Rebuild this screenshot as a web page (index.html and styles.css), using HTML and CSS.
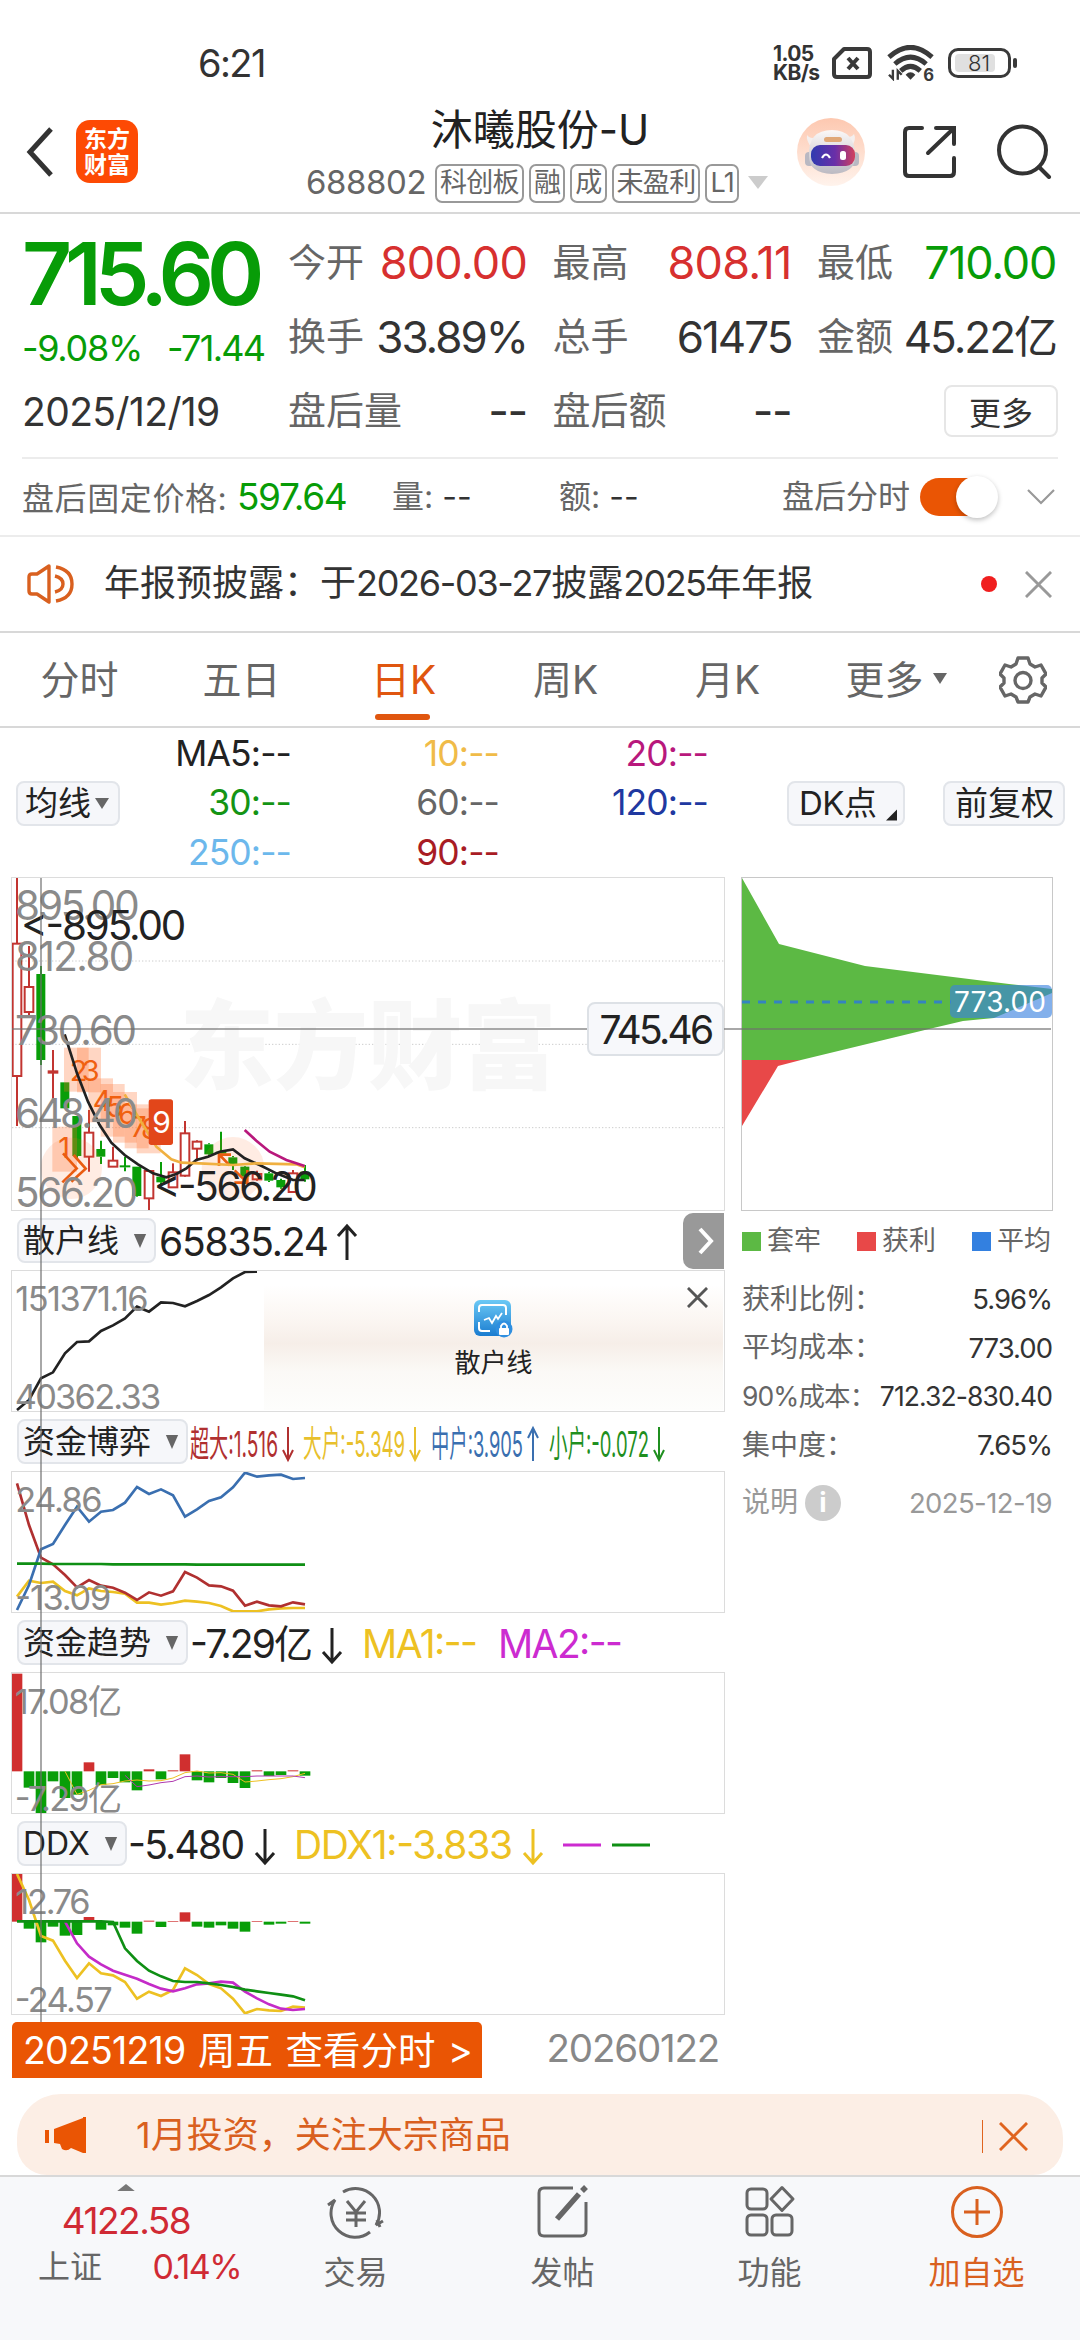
FILE: index.html
```html
<!DOCTYPE html>
<html lang="zh-CN">
<head>
  <meta charset="UTF-8">
  <meta name="viewport" content="width=device-width, initial-scale=1.0">
  <title>沐曦股份-U</title>
  <link rel="stylesheet" href="styles.css">
</head>
<body>
  <div class="status-bar">
    <span class="clock">6:21</span>
    <div class="status-icons">
      <span class="net-speed">1.05<br>KB/s</span>
      <svg class="sim-icon" viewBox="0 0 40 32">
        <path d="M12 2H35Q38 2 38 5V27Q38 30 35 30H5Q2 30 2 27V12Z" fill="none" stroke="#3a3a3a" stroke-width="4" stroke-linejoin="round"/>
        <path d="M16 11L26 22M26 11L16 22" stroke="#3a3a3a" stroke-width="4"/>
      </svg>
      <svg class="wifi-icon" viewBox="0 0 48 36">
        <path d="M2 12Q24 -8 46 12M8 19Q24 5 40 19M14 26Q24 17 34 26" fill="none" stroke="#3a3a3a" stroke-width="5"/>
        <path d="M19 30L24 35L29 30Q24 25 19 30Z" fill="#3a3a3a"/>
        <path d="M6 25V34L2 30M11 35V26L15 30" fill="none" stroke="#3a3a3a" stroke-width="2.400"/>
        <text x="37" y="36" font-size="17" font-weight="700" fill="#3a3a3a">6</text>
      </svg>
      <div class="battery"><span>81</span></div>
    </div>
  </div>

  <div class="header">
    <svg class="back-icon" viewBox="0 0 28 50"><path d="M25 2L4 25L25 48" fill="none" stroke="#333" stroke-width="5"/></svg>
    <div class="app-logo">东方<br>财富</div>
    <div class="stock-title">
      <div class="stock-name">沐曦股份-U</div>
      <div class="stock-tags">
        <span class="stock-code">688802</span>
        <span class="tag">科创板</span>
        <span class="tag">融</span>
        <span class="tag">成</span>
        <span class="tag">未盈利</span>
        <span class="tag">L1</span>
        <svg class="tag-arrow" viewBox="0 0 20 14"><path d="M0 0H20L10 13Z" fill="#ccc"/></svg>
      </div>
    </div>
    <svg class="robot-icon" viewBox="0 0 68 68">
      <defs>
        <linearGradient id="halo" x1="0" y1="0" x2="0" y2="1"><stop offset="0" stop-color="#fdc8b0"/><stop offset="1" stop-color="#fff3ec"/></linearGradient>
        <linearGradient id="visor" x1="0" y1="0" x2="1" y2="0"><stop offset="0" stop-color="#2f3bb0"/><stop offset=".55" stop-color="#6a2fa8"/><stop offset="1" stop-color="#d2405c"/></linearGradient>
        <linearGradient id="helmet" x1="0" y1="0" x2="0" y2="1"><stop offset="0" stop-color="#fbf8f7"/><stop offset="1" stop-color="#bcbac2"/></linearGradient>
      </defs>
      <circle cx="34" cy="34" r="34" fill="url(#halo)"/>
      <path d="M10 17Q9 22 14 29L20 20Q13 21 10 17ZM57 16Q60 22 54 29L47 19Q54 20 57 16Z" fill="#f4efee"/>
      <rect x="8" y="34" width="9" height="14" rx="4" fill="#b9b8c2"/>
      <rect x="53" y="34" width="9" height="14" rx="4" fill="#b9b8c2"/>
      <path d="M12 38Q11 12 35 12Q58 12 58 38Q59 55 35 56Q12 55 12 38Z" fill="url(#helmet)"/>
      <rect x="27" y="19" width="18" height="5" rx="2.500" fill="#e0a878"/>
      <rect x="14" y="27" width="44" height="21" rx="9" fill="url(#visor)"/>
      <path d="M25 40Q29 33 33 40" fill="none" stroke="#fff" stroke-width="2.200"/>
      <rect x="43" y="33" width="6" height="9" rx="2.500" fill="#fff"/>
    </svg>
    <svg class="share-icon" viewBox="0 0 54 54" fill="none" stroke="#333" stroke-width="4" stroke-linecap="round">
      <path d="M19 3H6Q2 3 2 7V47Q2 51 6 51H47Q51 51 51 47V33"/>
      <path d="M25 28L49 5M33 3H51V19"/>
    </svg>
    <svg class="search-icon" viewBox="0 0 56 56" fill="none" stroke="#333" stroke-width="4" stroke-linecap="round">
      <circle cx="25.500" cy="27" r="23.500"/><path d="M42 44L52 54"/>
    </svg>
  </div>

  <div class="quote">
    <div class="quote-main">
      <div class="price">715.60</div>
      <div class="change"><span>-9.08%</span><span class="diff">-71.44</span></div>
      <div class="date">2025/12/19</div>
    </div>
    <div class="stats">
      <div class="stat"><span>今开</span><b class="up wide">800.00</b></div>
      <div class="stat"><span>最高</span><b class="up wide">808.11</b></div>
      <div class="stat"><span>最低</span><b class="down">710.00</b></div>
      <div class="stat"><span>换手</span><b class="tight">33.89%</b></div>
      <div class="stat"><span>总手</span><b class="tight">61475</b></div>
      <div class="stat"><span>金额</span><b class="tight">45.22亿</b></div>
      <div class="stat"><span>盘后量</span><b>--</b></div>
      <div class="stat"><span>盘后额</span><b>--</b></div>
      <div class="stat stat-more"><button class="more-btn">更多</button></div>
    </div>
  </div>

  <div class="after-hours">
    <span class="ah-label ah-first">盘后固定价格: <b class="down">597.64</b></span>
    <span class="ah-label ah-vol">量: <b>--</b></span>
    <span class="ah-label ah-amt">额: <b>--</b></span>
    <span class="ah-label">盘后分时</span>
    <div class="toggle"></div>
    <svg class="ah-chevron" viewBox="0 0 28 16"><path d="M1 1L14 14L27 1" fill="none" stroke="#999" stroke-width="2.200"/></svg>
  </div>

  <div class="notice">
    <svg class="horn-icon" viewBox="0 0 48 42" fill="none" stroke="#d9601f" stroke-width="3.400">
      <path d="M22 3L10 11H5Q2 11 2 14V28Q2 31 5 31H10L22 39Z" stroke-linejoin="round"/>
      <path d="M29 4Q45 7 45 21Q45 35 29 38M28 13Q36 15 36 21Q36 27 28 29"/>
    </svg>
    <span class="notice-text">年报预披露：于<i>2026-03-27</i>披露<i class="yr">2025</i>年年报</span>
    <span class="red-dot"></span>
    <svg class="close-icon" viewBox="0 0 28 28"><path d="M1 1L27 27M27 1L1 27" stroke="#999" stroke-width="3"/></svg>
  </div>

  <div class="tabs">
    <span class="tab">分时</span>
    <span class="tab">五日</span>
    <span class="tab active">日K</span>
    <span class="tab">周K</span>
    <span class="tab">月K</span>
    <span class="tab">更多<svg class="tri" viewBox="0 0 14 11"><path d="M0 0H14L7 11Z" fill="#666"/></svg></span>
    <svg class="gear-icon" viewBox="0 0 48 48" fill="none" stroke="#666" stroke-width="3.400">
      <path d="M19 2H29L31 8L36 11L42 9L47 18L43 22V27L47 31L42 40L36 38L31 41L29 46H19L17 41L12 38L6 40L1 31L5 27V22L1 18L6 9L12 11L17 8Z" stroke-linejoin="round"/>
      <circle cx="24" cy="24.500" r="8"/>
    </svg>
  </div>

  <div class="ma-bar">
    <button class="chip ma-chip">均线<svg class="tri" viewBox="0 0 14 11"><path d="M0 0H14L7 11Z" fill="#666"/></svg></button>
    <div class="ma-grid">
      <span class="c-ink">MA5:--</span><span class="c-amber">10:--</span><span class="c-pink">20:--</span>
      <span class="c-green">30:--</span><span class="c-gray">60:--</span><span class="c-navy">120:--</span>
      <span class="c-sky">250:--</span><span class="c-crimson">90:--</span>
    </div>
    <button class="chip dk-chip">DK点<svg class="corner" viewBox="0 0 12 12"><path d="M12 0V12H0Z" fill="#222"/></svg></button>
    <button class="chip fq-chip">前复权</button>
  </div>

  <div class="charts">
    <div class="left-col">
      <!-- k line -->
      <div class="panel k-panel">
        <svg id="kline" viewBox="37 24 2136 996">
          <g class="grid-lines">
            <path d="M37 273H2173M37 523H2173M37 773H2173"/>
          </g>
          <text class="watermark" x="540" y="634" textLength="1130" lengthAdjust="spacingAndGlyphs">东方财富</text>
          <g id="candles"></g>
          <g class="td">
            <circle cx="215" cy="895" r="92"/><circle cx="700" cy="895" r="94"/>
            <rect x="158" y="770" width="74" height="135"/>
            <rect x="193" y="533" width="74" height="132"/>
            <rect x="232" y="533" width="72" height="134"/>
            <rect x="266" y="625" width="74" height="132"/>
            <rect x="303" y="642" width="72" height="158"/>
            <rect x="340" y="666" width="72" height="152"/>
            <rect x="375" y="703" width="72" height="132"/>
            <rect x="411" y="715" width="72" height="135"/>
          </g>
          <g class="td-num">
            <text x="176" y="864">1</text><text x="210" y="632">2</text><text x="246" y="632">3</text>
            <text x="279" y="722">4</text><text x="320" y="742">5</text><text x="355" y="762">6</text>
            <text x="392" y="802">7</text><text x="424" y="808">8</text>
          </g>
          <g class="td-arrow">
            <path d="M190 850L231 895L188 937M222 855L258 896L215 935"/>
            <path d="M690 886L660 855M658 888V854H694M705 901L742 937M704 938H743V900"/>
          </g>
          <path class="line ink" d="M195 493L232 610L265 695L300 765L335 818L375 855L415 883L460 910L500 922L530 912L560 895L590 870L625 860L660 845L700 838L735 865L780 885L830 910L880 930L915 930"/>
          <path class="line amber" d="M375 673L400 715L430 765L470 830L515 868L545 878L600 880L700 885L770 880L890 883L915 892"/>
          <path class="line pink" d="M735 780L770 812L810 845L860 870L915 888"/>
          <rect x="447" y="688" width="73" height="137" rx="8" fill="#e2461a"/>
          <text x="458" y="790" font-size="90" fill="#fff">9</text>
          <g class="axis">
            <text x="46" y="151" textLength="374">895.00</text>
            <text x="46" y="303" textLength="358">812.80</text>
            <text x="46" y="525" textLength="366">730.60</text>
            <text x="46" y="775" textLength="370">648.40</text>
            <text x="46" y="1011" textLength="370">566.20</text>
          </g>
          <g class="peak">
            <text x="64" y="210" textLength="496">&lt;-895.00</text>
            <text x="462" y="993" textLength="492">&lt;-566.20</text>
          </g>
        </svg>
      </div>

      <div class="ind-head">
        <button class="chip ind-chip">散户线<svg class="tri" viewBox="0 0 14 16"><path d="M0 0H14L7 16Z" fill="#666"/></svg></button>
        <svg class="ind-values" viewBox="155 0 520 60">
          <text x="158" y="45" textLength="170">65835.24</text>
          <path class="arr ink" d="M346 49V16M337 25L346 15L355 25"/>
        </svg>
        <div class="expand-btn"><svg viewBox="0 0 16 28"><path d="M2 2L13 14L2 26" fill="none" stroke="#fff" stroke-width="4"/></svg></div>
      </div>
      <div class="panel">
        <svg viewBox="0 183 2136 420">
          <g id="retail"></g>
          <g class="axis small">
            <text x="10" y="302" textLength="400">151371.16</text>
            <text x="8" y="597" textLength="440">40362.33</text>
          </g>
        </svg>
        <div class="lock-cover">
          <svg class="lock-icon" viewBox="0 0 39 38">
            <defs><linearGradient id="blue" x1="0" y1="0" x2="0" y2="1"><stop offset="0" stop-color="#6cc9f5"/><stop offset="1" stop-color="#1a7cd0"/></linearGradient></defs>
            <rect x="0" y="0" width="37" height="36" rx="6" fill="url(#blue)"/>
            <path d="M5 12V8Q5 5 8 5H29Q32 5 32 8V15M5 22V28Q5 31 8 31H16" fill="none" stroke="#fff" stroke-width="2"/>
            <path d="M10 20L15 18L18 23L22 16L24 19L28 13" fill="none" stroke="#fff" stroke-width="1.800"/>
            <circle cx="30" cy="29" r="8.500" fill="#2f8fe0"/>
            <rect x="25" y="28" width="10" height="7" rx="1" fill="#fff"/>
            <path d="M27 28V26Q30 21 33 26V28" fill="none" stroke="#fff" stroke-width="1.800"/>
          </svg>
          <span>散户线</span>
          <svg class="cover-close" viewBox="0 0 22 22"><path d="M1 1L21 21M21 1L1 21" stroke="#555" stroke-width="3"/></svg>
        </div>
      </div>

      <div class="ind-head">
        <button class="chip ind-chip">资金博弈<svg class="tri" viewBox="0 0 14 16"><path d="M0 0H14L7 16Z" fill="#666"/></svg></button>
        <svg class="ind-values" viewBox="188 0 520 60">
          <g class="narrow">
            <text x="190" y="45" textLength="88" lengthAdjust="spacingAndGlyphs" fill="#b03030">超大:1.516</text>
            <text x="303" y="45" textLength="102" lengthAdjust="spacingAndGlyphs" fill="#e8c02c">大户:-5.349</text>
            <text x="431" y="45" textLength="92" lengthAdjust="spacingAndGlyphs" fill="#3a6fb0">中户:3.905</text>
            <text x="549" y="45" textLength="100" lengthAdjust="spacingAndGlyphs" fill="#1f8f1f">小户:-0.072</text>
            <path class="arr" stroke="#b03030" d="M288 15V48M283 38L288 48L293 38"/>
            <path class="arr" stroke="#e8c02c" d="M415 15V48M410 38L415 48L420 38"/>
            <path class="arr" stroke="#3a6fb0" d="M533 49V16M528 26L533 16L538 26"/>
            <path class="arr" stroke="#1f8f1f" d="M659 15V48M654 38L659 48L664 38"/>
          </g>
        </svg>
      </div>
      <div class="panel">
        <svg viewBox="0 186 2136 420">
          <g id="funds"></g>
          <g class="axis small">
            <text x="10" y="305" textLength="262">24.86</text>
            <text x="10" y="600" textLength="288">-13.09</text>
          </g>
        </svg>
      </div>

      <div class="ind-head">
        <button class="chip ind-chip">资金趋势<svg class="tri" viewBox="0 0 14 16"><path d="M0 0H14L7 16Z" fill="#666"/></svg></button>
        <svg class="ind-values" viewBox="188 0 520 60">
          <text x="190" y="45" textLength="123">-7.29亿</text>
          <path class="arr ink" d="M332 15V48M323 39L332 49L341 39"/>
          <text x="362" y="45" textLength="116" fill="#edc122">MA1:--</text>
          <text x="498" y="45" textLength="125" fill="#cc2bd0">MA2:--</text>
        </svg>
      </div>
      <div class="panel">
        <svg viewBox="0 188 2136 420">
          <g id="trend"></g>
          <g class="axis small">
            <text x="8" y="310" textLength="322">17.08亿</text>
            <text x="8" y="602" textLength="322">-7.29亿</text>
          </g>
        </svg>
      </div>

      <div class="ind-head">
        <button class="chip ind-chip">DDX<svg class="tri" viewBox="0 0 14 16"><path d="M0 0H14L7 16Z" fill="#666"/></svg></button>
        <svg class="ind-values" viewBox="127 0 520 60">
          <text x="128" y="45" textLength="117">-5.480</text>
          <path class="arr ink" d="M265 15V48M256 39L265 49L274 39"/>
          <text x="294" y="45" textLength="219" fill="#edc122">DDX1:-3.833</text>
          <path class="arr" stroke="#edc122" d="M533 15V48M524 39L533 49L542 39"/>
          <path class="arr" stroke="#cc2bd0" d="M563 31H601"/>
          <path class="arr" stroke="#0f8f14" d="M612 31H650"/>
        </svg>
      </div>
      <div class="panel">
        <svg viewBox="0 162 2136 420">
          <g id="ddx"></g>
          <g class="axis small">
            <text x="10" y="282" textLength="226">12.76</text>
            <text x="8" y="575" textLength="294">-24.57</text>
          </g>
        </svg>
      </div>

      <div class="date-row">
        <span class="day-btn"><i>20251219</i> 周五 查看分时 &gt;</span>
        <span class="end-date">20260122</span>
      </div>
    </div>

    <div class="right-col">
      <div class="chip-panel">
        <svg viewBox="741 878 310 332">
          <path fill="#5cb944" d="M741 878L778 944L864 966L1008 984L1051 989V993L993 1018L962 1021L928 1029L800 1060H741Z"/>
          <path fill="#e84848" d="M741 1060H800L777 1066L741 1126Z"/>
          <path d="M741 1002H950" stroke="#3484c0" stroke-width="3" stroke-dasharray="8 8"/>
          <rect x="949" y="985" width="102" height="33" rx="5" fill="#3b82e0" fill-opacity=".63"/>
          <text x="953" y="1012" font-size="28" fill="#fff" textLength="92">773.00</text>
        </svg>
      </div>
      <div class="legend">
        <span class="lg-green">套牢</span><span class="lg-red">获利</span><span class="lg-blue">平均</span>
      </div>
      <div class="cost-row"><span>获利比例：</span><b>5.96%</b></div>
      <div class="cost-row"><span>平均成本：</span><b>773.00</b></div>
      <div class="cost-row"><span class="fit">90%成本：</span><b class="fit">712.32-830.40</b></div>
      <div class="cost-row"><span>集中度：</span><b>7.65%</b></div>
      <div class="cost-row explain"><span>说明</span><span class="info">i</span><b>2025-12-19</b></div>
    </div>

    <div class="cross-v"></div>
    <div class="cross-h"></div>
    <div class="cross-price">745.46</div>
  </div>

  <div class="banner">
    <svg class="mega-icon" viewBox="0 0 42 38" fill="#ea5504">
      <path d="M0 13H4V26H0ZM9 12L38 1V0H41V36H38L26 31Q22 35 17 32L15 27L9 26Z"/>
    </svg>
    <span class="banner-text">1月投资，关注大宗商品</span>
    <span class="banner-sep"></span>
    <svg class="banner-close" viewBox="0 0 30 30"><path d="M1 1L29 29M29 1L1 29" stroke="#e0641f" stroke-width="3"/></svg>
  </div>

  <div class="nav">
    <div class="nav-index">
      <svg class="nav-tri" viewBox="0 0 20 8"><path d="M0 8L10 0L20 8Z" fill="#777"/></svg>
      <div class="idx-value">4122.58</div>
      <div class="idx-row"><span>上证</span><b>0.14%</b></div>
    </div>
    <div class="nav-item">
      <svg viewBox="0 0 60 54" fill="none" stroke="#666" stroke-width="3">
        <path d="M17 7A24 24 0 0 1 50 40L57 36M54 42L51 35M44 47A24 24 0 0 1 9 15L2 20"/>
        <path d="M21 16L30 27L39 16M30 27V42M20 28H40M20 35H40"/>
      </svg>
      <span>交易</span>
    </div>
    <div class="nav-item">
      <svg viewBox="0 0 60 54" fill="none" stroke="#666" stroke-width="3">
        <path d="M40 3H11Q6 3 6 8V46Q6 51 11 51H48Q53 51 53 46V17"/>
        <path d="M24 34L46 9M49 6L53 2" stroke-width="5.500"/>
      </svg>
      <span>发帖</span>
    </div>
    <div class="nav-item">
      <svg viewBox="0 0 60 54" fill="none" stroke="#666" stroke-width="3">
        <rect x="7" y="4" width="20" height="20" rx="4"/>
        <rect x="7" y="30" width="20" height="20" rx="4"/>
        <rect x="32" y="30" width="20" height="20" rx="4"/>
        <path d="M42 2.500L53 14L42 25.500L31 14Z" stroke-linejoin="round"/>
      </svg>
      <span>功能</span>
    </div>
    <div class="nav-item accent">
      <svg viewBox="0 0 60 54" fill="none" stroke="#d9601f" stroke-width="3">
        <circle cx="30" cy="27" r="24.500"/><path d="M30 14V40M17 27H43"/>
      </svg>
      <span>加自选</span>
    </div>
  </div>

  <script>
    const NS = 'http://www.w3.org/2000/svg';
    function add(parent, tag, attrs) {
      const el = document.createElementNS(NS, tag);
      for (const k in attrs) el.setAttribute(k, attrs[k]);
      parent.appendChild(el);
    }
    const RED = '#c23531', GREEN = '#089e08';

    // high, body top, body bottom, low, 1 = up
    const candles = [
      [24,221,618,768,1],[228,351,426,440,1],[288,312,570,585,0],[540,606,609,695,1],[637,637,715,715,0],
      [738,738,858,864,0],[720,788,860,905,1],[812,837,860,882,0],[830,872,890,890,1],[860,889,892,904,0],
      [890,890,978,980,0],[903,903,985,1022,1],[876,920,937,945,0],[880,907,952,952,1],[753,790,917,920,1],
      [811,815,836,874,1],[820,823,853,860,0],[785,848,851,860,0],[858,862,885,900,0],[888,890,920,930,0],
      [902,912,928,932,1],[905,910,932,936,0],[926,930,952,956,0],[900,910,966,968,1],[885,905,928,935,0]
    ];
    const kg = document.getElementById('candles');
    candles.forEach(([hi, top, bot, lo, up], i) => {
      const x = 52 + 36 * i, color = up ? RED : GREEN;
      add(kg, 'path', { d: `M${x} ${hi}V${top}M${x} ${bot}V${lo}`, stroke: color, 'stroke-width': 6 });
      if (bot - top < 6) {
        add(kg, 'path', { d: `M${x - 16} ${top}H${x + 16}`, stroke: color, 'stroke-width': up ? 10 : 6 });
      } else if (up) {
        add(kg, 'rect', { x: x - 13, y: top, width: 26, height: bot - top, fill: 'none', stroke: color, 'stroke-width': 6 });
      } else {
        add(kg, 'rect', { x: x - 14, y: top, width: 27, height: bot - top, fill: color });
      }
    });

    function line(id, start, ys, color, width) {
      const pts = ys.map((y, i) => `${15 + 36 * (start + i)},${y}`).join(' ');
      add(document.getElementById(id), 'polyline', { points: pts, fill: 'none', stroke: color, 'stroke-width': width });
    }
    function bars(id, base, ys) {
      ys.forEach((y, i) => {
        add(document.getElementById(id), 'rect', {
          x: 36 * i - 1, y: Math.min(y, base), width: 32, height: Math.abs(y - base),
          fill: y < base ? '#d02f2f' : GREEN
        });
      });
    }

    line('retail', 0, [600,570,505,487,430,396,394,363,346,325,290,305,277,279,289,273,255,232,205,186,185], '#222', 8);

    line('funds', 0, [560,512,519,515,543,556,535,543,546,551,578,578,584,579,572,575,579,588,604,604,604,598,595,594,594], '#edc122', 8);
    line('funds', 0, [220,345,443,463,495,532,510,527,533,548,570,547,557,544,486,503,526,529,542,587,575,586,589,577,583], '#b03030', 8);
    line('funds', 0, [600,525,418,402,345,290,335,305,300,278,231,252,238,256,320,298,273,262,232,188,200,196,194,207,204], '#3a6fb0', 8);
    line('funds', 0, [461,461,461,462,462,462,462,462,463,463,463,463,463,463,463,464,464,464,464,464,464,464,464,464,464], '#0f8f14', 8);

    bars('trend', 483, [190,532,608,513,563,553,456,524,503,516,540,477,507,480,432,510,516,503,518,533,480,497,494,480,496]);
    line('trend', 4, [483,552,540,523,520,512,509,512,511,503,487,482,488,487,492,515,512,508,505,499,489], '#edc122', 3);
    line('trend', 9, [495,529,524,517,513,499,497,500,499,499,499,497,497,497,497,502], '#b03ab0', 3);

    bars('ddx', 305, [162,326,367,320,347,345,291,329,316,323,341,302,321,303,277,320,323,316,326,335,303,314,311,303,311]);
    line('ddx', 0, [162,240,348,362,422,474,430,460,466,486,536,515,528,510,445,465,492,505,536,580,567,571,573,560,563], '#edc122', 8);
    line('ddx', 4, [305,370,410,433,452,464,476,492,506,514,505,493,490,485,488,515,535,553,566,570,567], '#c42bc8', 8);
    line('ddx', 0, [304,304,304,304,304,304,304,304,306,385,423,452,469,483,486,486,490,495,501,509,514,519,524,529,541], '#0f8f14', 8);
  </script>
</body>
</html>
```

FILE: styles.css
```css
* {
  margin: 0;
  padding: 0;
  box-sizing: border-box;
}
body {
  width: 1080px;
  height: 2340px;
  display: flex;
  flex-direction: column;
  background: #fff;
  color: #333;
  font-family: "Inter", "Noto Sans CJK SC", sans-serif;
  line-height: 1.2;
  overflow: hidden;
}
svg {
  display: block;
  flex: none;
}
button {
  font-family: inherit;
  color: inherit;
}
b, i {
  font-weight: 400;
  font-style: normal;
}
.up { color: #d7302f !important; }
.down { color: #079c07 !important; }

/* status bar */
.status-bar {
  height: 92px;
  padding: 33px 69px 0 198px;
  display: flex;
  justify-content: space-between;
}
.clock {
  font-size: 38px;
  line-height: 60px;
  letter-spacing: -1.6px;
}
.status-icons {
  display: flex;
  align-items: center;
  height: 60px;
}
.net-speed {
  font-size: 21px;
  line-height: 19px;
  font-weight: 700;
  width: 59px;
  letter-spacing: -0.6px;
}
.sim-icon {
  width: 40px;
  height: 32px;
}
.wifi-icon {
  width: 47px;
  height: 36px;
  margin: 0 14px 0 15px;
}
.battery {
  position: relative;
  width: 63px;
  height: 30px;
  border: 3px solid #3a3a3a;
  border-radius: 10px;
  padding: 3px 4px;
  font-size: 22px;
  font-weight: 300;
  line-height: 19px;
  text-align: center;
}
.battery span {
  display: block;
  width: 40px;
  height: 18px;
  padding-left: 8px;
  background: #e0e0e0;
  border-radius: 4px;
}
.battery::after {
  content: "";
  position: absolute;
  right: -9px;
  top: 7px;
  width: 4px;
  height: 10px;
  border-radius: 2px;
  background: #3a3a3a;
}

/* header */
.header {
  height: 122px;
  border-bottom: 2px solid #d8d8d8;
  display: flex;
  padding-left: 26px;
}
.back-icon {
  width: 28px;
  height: 50px;
  margin-top: 35px;
}
.app-logo {
  width: 62px;
  height: 63px;
  margin: 28px 0 0 22px;
  padding-top: 6px;
  border-radius: 14px;
  background: #fd4a04;
  color: #fff;
  font-size: 23px;
  line-height: 26px;
  font-weight: 700;
  text-align: center;
}
.stock-title {
  width: 482px;
  margin-left: 160px;
  padding-top: 13px;
}
.stock-name {
  width: 484px;
  height: 50px;
  line-height: 50px;
  text-align: center;
  font-size: 42px;
  color: #222;
}
.stock-tags {
  display: flex;
  align-items: center;
  height: 38px;
  margin-top: 9px;
  padding-left: 8px;
  color: #666;
}
.stock-code {
  font-size: 33px;
  width: 129px;
  letter-spacing: -0.4px;
}
.tag {
  height: 39px;
  padding: 0 3px;
  margin-right: 5px;
  border: 2px solid #999;
  border-radius: 7px;
  font-size: 27px;
  line-height: 34px;
  letter-spacing: -0.7px;
  white-space: nowrap;
}
.tag-arrow {
  width: 20px;
  height: 14px;
  margin-left: 4px;
}
.robot-icon {
  width: 68px;
  height: 68px;
  margin: 26px 0 0 17px;
}
.share-icon {
  width: 54px;
  height: 54px;
  margin: 33px 0 0 38px;
}
.search-icon {
  width: 56px;
  height: 56px;
  margin: 31px 0 0 40px;
}

/* quote */
.quote {
  display: flex;
  margin: 0 22px;
  padding-top: 12px;
  height: 245px;
  border-bottom: 2px solid #ececec;
}
.quote-main {
  width: 266px;
}
.price {
  height: 95px;
  line-height: 95px;
  font-size: 87px;
  font-weight: 600;
  letter-spacing: -7.1px;
  color: #079c07;
}
.change {
  display: flex;
  gap: 25px;
  height: 53px;
  line-height: 55px;
  font-size: 36px;
  letter-spacing: -1.3px;
  color: #079c07;
}
.change .diff {
  letter-spacing: -1.7px;
}
.date {
  line-height: 75px;
  font-size: 39px;
  letter-spacing: -0.6px;
}
.stats {
  flex: 1;
  display: grid;
  grid-template-columns: repeat(3, 239px);
  grid-auto-rows: 74px;
  column-gap: 25.5px;
}
.stat {
  display: flex;
  justify-content: space-between;
  align-items: center;
  font-size: 38px;
  color: #666;
  white-space: nowrap;
}
.stat b {
  font-size: 45px;
  letter-spacing: -1.3px;
  color: #333;
}
.stat b.wide {
  letter-spacing: -0.8px;
}
.stat b.tight {
  font-size: 44px;
  letter-spacing: -2px;
}
.stat-more {
  justify-content: flex-end;
}
.more-btn {
  width: 114px;
  height: 52px;
  margin-right: -2px;
  border: 2px solid #e6e6e6;
  border-radius: 8px;
  background: #fff;
  color: #333;
  font-size: 32px;
}

.after-hours {
  display: flex;
  align-items: center;
  height: 78px;
  padding: 0 25px 0 22px;
  border-bottom: 2px solid #ececec;
}
.ah-label {
  font-size: 32px;
  color: #666;
  white-space: nowrap;
}
.ah-label b {
  color: #333;
}
.ah-first {
  width: 370px;
  letter-spacing: 0.6px;
}
.ah-first b {
  font-size: 37px;
  letter-spacing: -1.4px;
}
.ah-vol {
  width: 167px;
}
.ah-amt {
  width: 223px;
}
.toggle {
  width: 78px;
  height: 38px;
  margin-left: 10px;
  border-radius: 19px;
  background: linear-gradient(90deg, #ea5504 70%, transparent 70%);
  position: relative;
}
.toggle::after {
  content: "";
  position: absolute;
  right: 0;
  top: -2px;
  width: 42px;
  height: 42px;
  border-radius: 50%;
  background: #fff;
  box-shadow: 0 2px 5px rgba(0, 0, 0, 0.25);
}
.ah-chevron {
  width: 28px;
  height: 16px;
  margin-left: 29px;
}

.notice {
  display: flex;
  align-items: center;
  height: 96px;
  padding: 0 28px 0 27px;
  border-bottom: 2px solid #d8d8d8;
}
.horn-icon {
  width: 48px;
  height: 42px;
}
.notice-text {
  flex: 1;
  margin-left: 29px;
  font-size: 36px;
  white-space: nowrap;
}
.notice-text i {
  letter-spacing: -1.3px;
}
.notice-text .yr {
  letter-spacing: -1.6px;
}
.red-dot {
  width: 16px;
  height: 16px;
  border-radius: 50%;
  background: #f01e1e;
}
.close-icon {
  width: 27px;
  height: 27px;
  margin-left: 28px;
}

.tabs {
  display: flex;
  align-items: center;
  height: 95px;
  border-bottom: 2px solid #d8d8d8;
}
.tab {
  position: relative;
  width: 162px;
  height: 93px;
  line-height: 93px;
  display: flex;
  justify-content: center;
  padding-right: 3px;
  font-size: 39px;
  color: #666;
}
.tab:nth-child(6) {
  padding-left: 13px;
}
.tab .tri {
  margin: 40px 0 0 9px;
}
.tab.active {
  color: #e0560f;
}
.tab.active::after {
  content: "";
  position: absolute;
  left: 51px;
  bottom: 6px;
  width: 55px;
  height: 6px;
  border-radius: 3px;
  background: #e0560f;
}
.tri {
  width: 14px;
  height: 11px;
}
.gear-icon {
  width: 48px;
  height: 48px;
  margin-left: 27px;
}

/* ma settings */
.ma-bar {
  display: flex;
  align-items: center;
  height: 150px;
  padding-left: 16px;
}
.chip {
  display: flex;
  align-items: center;
  height: 45px;
  border: 2px solid #e2e5ea;
  border-radius: 8px;
  background: #f6f7fa;
  color: #222;
  font-size: 33px;
  line-height: 41px;
  white-space: nowrap;
}
.ma-chip {
  width: 104px;
  padding-left: 7px;
}
.ma-chip .tri {
  margin-left: 4px;
}
.ma-grid {
  width: 667px;
  display: grid;
  grid-template-columns: 171px 208px 209px;
  grid-auto-rows: 49.5px;
  text-align: right;
  font-size: 35.5px;
  line-height: 49px;
  letter-spacing: -0.9px;
}
.dk-chip {
  width: 118px;
  padding-left: 10px;
  letter-spacing: -0.5px;
}
.corner {
  width: 11px;
  height: 12px;
  margin: 24px 0 0 9px;
}
.fq-chip {
  width: 122px;
  margin-left: 38px;
  padding-left: 10px;
}
.c-ink { color: #222; }
.c-amber { color: #f0bb48; }
.c-pink { color: #b8187c; }
.c-green { color: #149414; }
.c-gray { color: #666; }
.c-navy { color: #2038a0; }
.c-sky { color: #6cb8ec; }
.c-crimson { color: #a81c24; }

/* charts */
.charts {
  position: relative;
  display: flex;
  gap: 18px;
  height: 1216px;
  padding-left: 12px;
}
.left-col {
  width: 712px;
}
.panel {
  position: relative;
  height: 140px;
  box-shadow: 0 0 0 1px #dcdcdc;
}
.panel > svg {
  width: 712px;
  height: 140px;
}
.k-panel,
.k-panel > svg {
  height: 332px;
}
.grid-lines {
  stroke: #ccc;
  stroke-width: 3;
  stroke-dasharray: 4 6;
}
.watermark {
  font-size: 290px;
  font-weight: 900;
  fill: #f7f7f7;
}
.line {
  fill: none;
  stroke-width: 8;
}
.ink { stroke: #222; }
.amber { stroke: #f0b040; }
.pink { stroke: #b8187c; }
.td {
  fill: #ff6a28;
  fill-opacity: 0.28;
}
.td circle {
  fill-opacity: 0.13;
}
.td-num {
  fill: #f06010;
  font-size: 87px;
}
.td-arrow {
  fill: none;
  stroke: #ea5c10;
  stroke-width: 8;
}
.axis {
  fill: #8a8a8a;
  font-size: 121px;
}
.axis.small {
  font-size: 103px;
}
.peak {
  fill: #222;
  font-size: 121px;
}
.ind-head {
  display: flex;
  align-items: center;
  height: 61px;
  padding-left: 5px;
  position: relative;
}
.ind-chip {
  padding: 0 7px 0 4px;
  font-size: 32px;
}
.ind-chip .tri {
  width: 14px;
  height: 14px;
  margin-left: 14px;
}
.ind-values {
  width: 520px;
  height: 60px;
  font-size: 39px;
  fill: #222;
  overflow: visible;
}
.narrow {
  font-size: 36px;
}
.arr {
  fill: none;
  stroke-width: 3;
}
.narrow .arr {
  stroke-width: 2;
}
.expand-btn {
  position: absolute;
  right: 0;
  top: 3px;
  width: 41px;
  height: 56px;
  padding: 14px 0 0 15px;
  border-radius: 10px 0 0 10px;
  background: #999;
}
.expand-btn svg {
  width: 16px;
  height: 28px;
}
.lock-cover {
  position: absolute;
  right: 1px;
  top: 0;
  width: 459px;
  height: 139px;
  padding-top: 29px;
  display: flex;
  flex-direction: column;
  align-items: center;
  background: linear-gradient(180deg, #fff 10%, #fbf6f2 35%, #f6eee8 52%, #fbf9f6 72%, #fdfdfc 100%);
  font-size: 26px;
  color: #222;
}
.lock-cover span {
  margin-top: 9px;
}
.lock-icon {
  width: 39px;
  height: 38px;
}
.cover-close {
  position: absolute;
  right: 15px;
  top: 16px;
  width: 21px;
  height: 21px;
}
.date-row {
  display: flex;
  justify-content: space-between;
  padding: 8px 5px 0 0;
}
.day-btn {
  width: 470px;
  height: 56px;
  padding-left: 11px;
  border-radius: 5px 5px 0 0;
  background: #ea5504;
  color: #fff;
  font-size: 37.5px;
  line-height: 58px;
  word-spacing: 2px;
  white-space: nowrap;
}
.day-btn i {
  letter-spacing: -0.8px;
}
.end-date {
  font-size: 38.5px;
  line-height: 52px;
  letter-spacing: -1.2px;
  color: #888;
}

.right-col {
  width: 310px;
}
.chip-panel {
  height: 332px;
  box-shadow: 0 0 0 1px #c8c8c8;
}
.chip-panel svg {
  width: 310px;
  height: 332px;
}
.legend {
  display: flex;
  justify-content: space-between;
  height: 65px;
  padding-right: 1px;
  font-size: 27px;
  line-height: 61px;
  color: #666;
}
.legend span::before {
  content: "";
  display: inline-block;
  width: 19px;
  height: 19px;
  margin-right: 6px;
  vertical-align: -1px;
  background: #5cb944;
}
.legend .lg-red::before { background: #e84848; }
.legend .lg-blue::before { background: #3380e0; }
.cost-row {
  display: flex;
  align-items: center;
  justify-content: space-between;
  height: 48.8px;
  font-size: 28px;
  color: #666;
  white-space: nowrap;
}
.cost-row b {
  font-size: 27.5px;
  color: #333;
  letter-spacing: -1px;
}
.cost-row .fit {
  font-size: 26.5px;
  letter-spacing: -0.9px;
}
.cost-row b.fit {
  margin-left: -20px;
}
.explain {
  height: 66px;
  color: #999;
}
.explain b {
  margin-left: auto;
  letter-spacing: -0.6px;
  color: #999;
}
.info {
  width: 36px;
  height: 36px;
  margin-left: 7px;
  border-radius: 50%;
  background: #ccc;
  color: #fff;
  font-size: 27px;
  line-height: 35px;
  font-weight: 700;
  text-align: center;
}

/* crosshair */
.cross-v {
  position: absolute;
  left: 40px;
  top: 0;
  width: 2px;
  height: 1144px;
  background: rgba(110, 110, 110, 0.6);
}
.cross-h {
  position: absolute;
  left: 12px;
  top: 150px;
  width: 1039px;
  height: 2px;
  background: rgba(110, 110, 110, 0.6);
}
.cross-price {
  position: absolute;
  left: 587px;
  top: 124px;
  width: 137px;
  height: 54px;
  border: 2px solid #dde1e6;
  border-radius: 8px;
  background: #f7f8fb;
  color: #222;
  font-size: 39px;
  line-height: 52px;
  letter-spacing: -2.7px;
  text-align: center;
}

/* banner */
.banner {
  display: flex;
  align-items: center;
  height: 81px;
  margin: 0 17px;
  padding: 3px 35px 0 28px;
  border-radius: 44px 44px 30px 30px;
  background: #fceee5;
}
.mega-icon {
  width: 42px;
  height: 38px;
}
.banner-text {
  flex: 1;
  margin-left: 49px;
  font-size: 36px;
  color: #d9601f;
}
.banner-sep {
  width: 1px;
  height: 33px;
  background: #e0641f;
}
.banner-close {
  width: 29px;
  height: 29px;
  margin-left: 16px;
}

.nav {
  display: flex;
  height: 165px;
  border-top: 2px solid #d8d8d8;
  background: #f7f8fa;
}
.nav-index {
  width: 252px;
  padding-top: 7px;
  display: flex;
  flex-direction: column;
  align-items: center;
}
.nav-tri {
  width: 20px;
  height: 7px;
}
.idx-value {
  margin-top: 8px;
  font-size: 37px;
  line-height: 44px;
  letter-spacing: -1.5px;
  color: #d02a34;
}
.idx-row {
  display: flex;
  justify-content: space-between;
  width: 203px;
  margin: 3px 0 0 27px;
  font-size: 32px;
  line-height: 42px;
  color: #666;
}
.idx-row b {
  font-size: 34px;
  letter-spacing: -1.6px;
  color: #d02a34;
}
.nav-item {
  width: 207px;
  padding-top: 8px;
  display: flex;
  flex-direction: column;
  align-items: center;
  font-size: 32px;
  color: #666;
}
.nav-item svg {
  width: 60px;
  height: 54px;
}
.nav-item span {
  margin-top: 15px;
}
.nav-item.accent {
  color: #d9601f;
}
```
